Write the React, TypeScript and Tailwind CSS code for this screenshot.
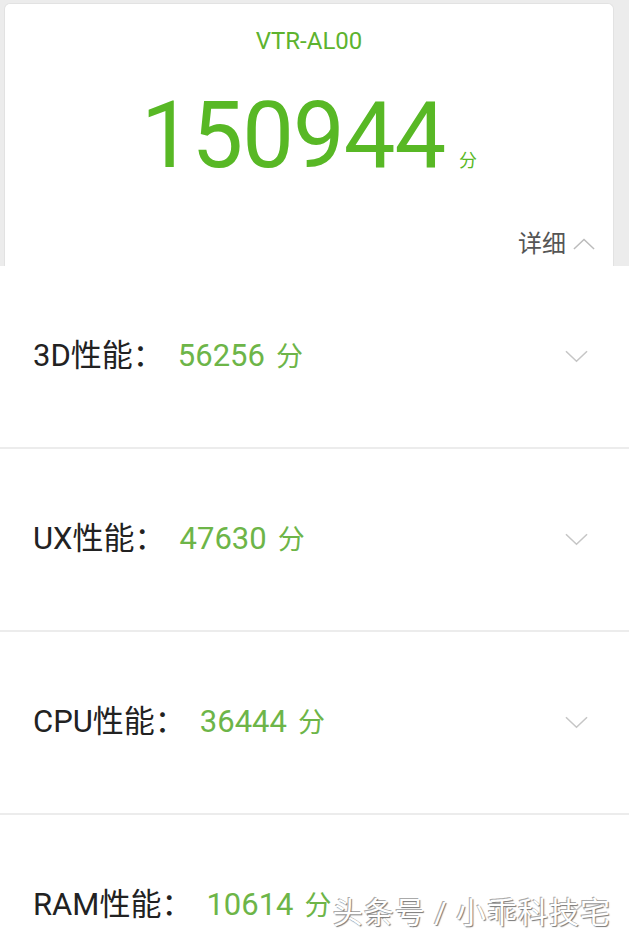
const rows = [
  { label: "3D性能：", score: "56256" },
  { label: "UX性能：", score: "47630" },
  { label: "CPU性能：", score: "36444" },
  { label: "RAM性能：", score: "10614" },
];

function Chevron({ up, className }: { up?: boolean; className?: string }) {
  return (
    <svg viewBox="0 0 24 13" className={className} fill="none" stroke="currentColor" strokeWidth={1.6}>
      {up ? <polyline points="1,12 12,1.5 23,12" /> : <polyline points="1,1 12,11.5 23,1" />}
    </svg>
  );
}

function ScoreRow({ label, score }: { label: string; score: string }) {
  return (
    <div className="h-[183px] flex items-center justify-between pl-[33px] pr-[41px] border-b-2 border-[#ececec]">
      <div className="flex items-baseline">
        <span className="text-[31px] text-[#222]">{label}</span>
        <span className="ml-[14px] text-[31px] text-[#6db548]">{score}</span>
        <span className="ml-[11px] text-[27px] text-[#6db548]">分</span>
      </div>
      <Chevron className="w-[23px] h-[13px] text-[#c6c6c6]" />
    </div>
  );
}

export default function App() {
  return (
    <div
      className="relative w-full h-[946px] overflow-hidden bg-white"
      style={{ fontFamily: "Roboto, 'Noto Sans CJK SC', sans-serif" }}
    >
      {/* 总分卡片 */}
      <div className="bg-[#ececec] pt-[3px] pl-[4px] pr-[15px]">
        <div className="h-[263px] bg-white rounded-t-[6px] border border-b-0 border-[#e2e2e2] flex flex-col items-center relative">
          <div className="mt-[25px] text-[24px] leading-none text-[#5db32f]">VTR-AL00</div>
          <div className="mt-[37px] flex items-baseline">
            <span className="text-[92px] leading-none text-[#58b825] tracking-[-1px]">150944</span>
            <span className="ml-[14px] text-[18px] text-[#58b825]">分</span>
          </div>
          <div className="absolute right-[18px] top-[222px] flex items-center text-[#555]">
            <span className="text-[24px]">详细</span>
            <Chevron up className="ml-[7px] w-[22px] h-[12px] text-[#bbb]" />
          </div>
        </div>
      </div>

      {rows.map((r) => (
        <ScoreRow key={r.label} label={r.label} score={r.score} />
      ))}

      {/* 水印 */}
      <div
        className="absolute right-[18px] top-[890px] text-[30px] text-white tracking-[1px]"
        style={{ textShadow: "1px 1px 1px #777, -1px -1px 0 #aaa" }}
      >
        头条号 / 小乖科技宅
      </div>
    </div>
  );
}
